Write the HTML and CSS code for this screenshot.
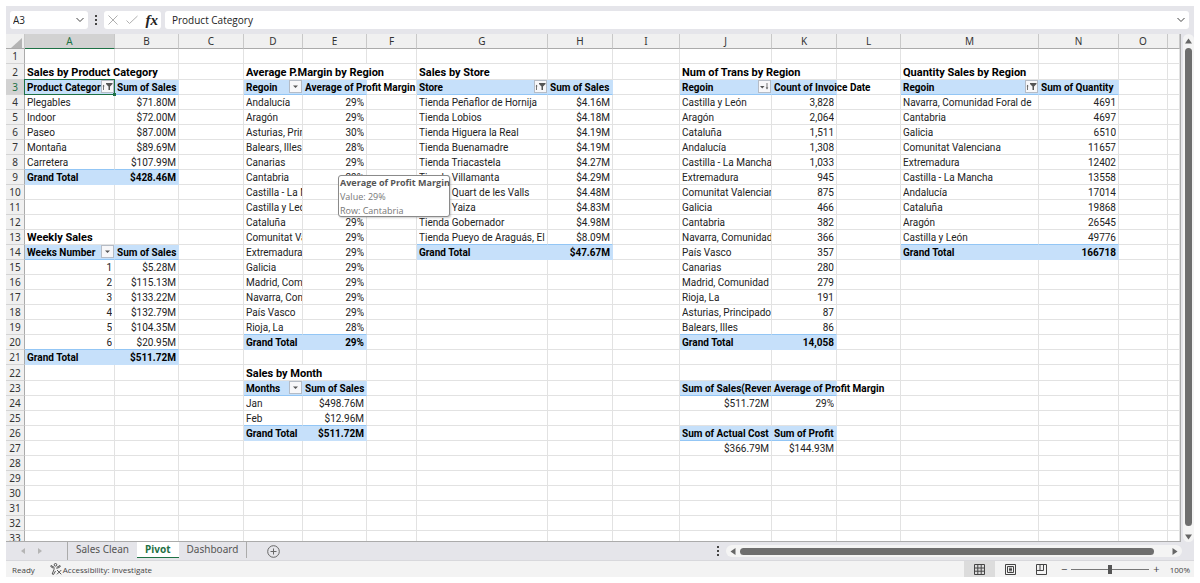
FILE: index.html
```
<!DOCTYPE html>
<html lang="en">
<head>
    <meta charset="UTF-8">
    <meta name="viewport" content="width=device-width, initial-scale=1.0">
    <title>Pivot</title>
    <link rel="stylesheet" href="styles.css">
</head>
<body>
    <div class="app">
        <header class="formula-bar">
            <div class="name-box">
                <input type="text" value="A3" aria-label="Name box">
                <button type="button" aria-label="Named ranges">
                    <svg width="10" height="6" viewBox="0 0 10 6"><path d="M1.5 1L5 4.5L8.5 1"/></svg>
                </button>
            </div>
            <span class="dots"></span>
            <div class="entry">
                <button type="button" aria-label="Cancel"><svg width="12" height="12" viewBox="0 0 12 12"><path class="off" d="M1.5 1.5L10.5 10.5M10.5 1.5L1.5 10.5"/></svg></button>
                <button type="button" aria-label="Enter"><svg width="14" height="12" viewBox="0 0 14 12"><path class="off" d="M1.5 6.5L4.5 9.5L12.5 2"/></svg></button>
                <button type="button" class="fx" aria-label="Insert function">fx</button>
            </div>
            <div class="formula">
                <input type="text" value="Product Category" aria-label="Formula">
                <button type="button" aria-label="Expand formula bar">
                    <svg width="10" height="6" viewBox="0 0 10 6"><path d="M1.5 1L5 4.5L8.5 1"/></svg>
                </button>
            </div>
        </header>

        <main class="workspace">
            <div class="sheet">
                <table id="grid" class="grid"></table>
            </div>
            <div class="vscroll">
                <svg width="7" height="6" viewBox="0 0 7 6"><path d="M3.5 0.5L7 5.5H0Z"/></svg>
                <span class="thumb"></span>
                <svg width="7" height="6" viewBox="0 0 7 6"><path d="M3.5 5.5L7 0.5H0Z"/></svg>
            </div>
        </main>

        <nav class="tabs">
            <div class="tab-arrows">
                <svg width="4" height="6" viewBox="0 0 4 6"><path d="M4 0V6L0 3Z"/></svg>
                <svg width="4" height="6" viewBox="0 0 4 6"><path d="M0 0V6L4 3Z"/></svg>
            </div>
            <a class="tab" href="#clean">Sales Clean</a>
            <a class="tab active" href="#pivot">Pivot</a>
            <a class="tab" href="#dashboard">Dashboard</a>
            <button type="button" class="add" aria-label="New sheet">
                <svg width="13" height="13" viewBox="0 0 13 13"><circle cx="6.5" cy="6.5" r="5.8"/><path d="M6.5 3.5V9.5M3.5 6.5H9.5"/></svg>
            </button>
            <div class="hscroll-wrap">
                <span class="dots"></span>
                <div class="hscroll">
                    <svg width="6" height="7" viewBox="0 0 6 7"><path d="M5.5 0V7L0.5 3.5Z"/></svg>
                    <span class="thumb"></span>
                    <svg width="6" height="7" viewBox="0 0 6 7"><path d="M0.5 0V7L5.5 3.5Z"/></svg>
                </div>
            </div>
        </nav>

        <footer class="status">
            <span class="ready">Ready</span>
            <svg class="access" width="12" height="12" viewBox="0 0 12 12"><circle cx="5.5" cy="1.8" r="1.3"/><path d="M1 2.5L4 4.2V6.5L2.2 11L3.6 11.4L5.5 8M10 2.5L7 4.2V6M1 2.5L0.8 3.6L3 5M10 2.5L10.3 3.6L8 5M7 7L11.3 11.3M11.3 7L7 11.3"/></svg>
            <a href="#accessibility">Accessibility: Investigate</a>
            <div class="views">
                <button type="button" class="on" aria-label="Normal view"><svg width="11" height="11" viewBox="0 0 11 11"><path d="M0.5 0.5H10.5V10.5H0.5ZM0.5 4H10.5M0.5 7.2H10.5M3.8 0.5V10.5M7.2 0.5V10.5"/></svg></button>
                <button type="button" aria-label="Page layout"><svg width="11" height="11" viewBox="0 0 11 11"><path d="M0.5 0.5H10.5V10.5H0.5ZM2.5 2.5H8.5V8.5H2.5ZM4 4.2H7M4 5.5H7M4 6.8H7"/></svg></button>
                <button type="button" aria-label="Page break preview"><svg width="11" height="11" viewBox="0 0 11 11"><path d="M0.5 0.5H10.5V10.5H0.5ZM0.5 6.5H7.5V0.5M4 0.5V6.5"/></svg></button>
            </div>
            <button type="button" class="zoom-btn" aria-label="Zoom out">−</button>
            <input type="range" min="10" max="190" value="100" aria-label="Zoom">
            <button type="button" class="zoom-btn" aria-label="Zoom in">+</button>
            <span class="percent">100%</span>
        </footer>
    </div>
    <script src="grid.js"></script>
</body>
</html>
```
FILE: styles.css
```
* {
    box-sizing: border-box;
}
body {
    margin: 0;
    padding: 6px;
    background: #fff;
    color: #222;
    font-family: "Noto Sans", sans-serif;
    font-size: 10px;
}
button, input {
    font: inherit;
    color: inherit;
    border: 0;
    padding: 0;
    margin: 0;
    background: none;
}
a {
    color: inherit;
    text-decoration: none;
}
svg {
    display: block;
    flex: none;
}
.app {
    display: flex;
    flex-direction: column;
    height: calc(100vh - 12px);
    background: #e5e5ea;
}

/* formula bar */
.formula-bar {
    display: flex;
    align-items: center;
    flex: none;
    height: 28px;
    padding: 0 5px 0 4px;
    font-family: "Open Sans", sans-serif;
}
.formula-bar svg {
    fill: none;
    stroke: #444;
    stroke-width: 1;
}
.formula-bar svg .off {
    stroke: #b0b0b0;
}
.name-box, .entry, .formula {
    display: flex;
    align-items: center;
    height: 18px;
    padding: 0 3px;
    background: #fff;
    border-radius: 3px;
}
.name-box {
    width: 78px;
}
.name-box input, .formula input {
    flex: 1;
    min-width: 0;
}
.dots {
    flex: none;
    width: 2px;
    height: 10px;
    margin: 0 7px;
    background: repeating-linear-gradient(#444 0 2px, transparent 2px 4px);
}
.entry {
    width: 57px;
    justify-content: space-between;
    margin-right: 4px;
}
.fx {
    font-family: "Liberation Serif", serif;
    font-size: 15px;
    font-style: italic;
    font-weight: bold;
    line-height: 16px;
}
.formula {
    flex: 1;
    padding-left: 7px;
}

/* sheet */
.workspace {
    display: flex;
    flex: 1;
    min-height: 0;
}
.sheet {
    flex: 1;
    min-width: 0;
    overflow: hidden;
    background: #fff;
    border-right: 1px solid #ababab;
    border-bottom: 1px solid #ababab;
}
.grid {
    width: 100%;
    table-layout: fixed;
    border-collapse: separate;
    border-spacing: 0;
    font-family: Roboto, sans-serif;
    line-height: 16px;
}
.grid tr {
    height: 15px;
}
.grid tr.tall {
    height: 16px;
}
.grid th {
    padding: 1px 0 0;
    background: #f0f0f0;
    border-right: 1px solid #c8c8c8;
    border-bottom: 1px solid #d4d4d4;
    font-family: "Noto Sans", sans-serif;
    font-weight: normal;
    line-height: 13px;
    color: #333;
}
.grid thead th {
    border-bottom-color: #ababab;
}
.grid tbody th {
    border-right-color: #ababab;
}
.grid th.current {
    background: #d2d2d2;
    color: #1e7145;
}
.grid thead th.current {
    border-bottom: 1px solid #1e7145;
}
.corner svg {
    margin: 2px 2px 0 auto;
    fill: #b4b4b4;
}
.grid td {
    position: relative;
    padding: 0 2px;
    border-right: 1px solid #e2e2e2;
    border-bottom: 1px solid #e2e2e2;
    white-space: nowrap;
}
.cell {
    display: flex;
    overflow: hidden;
    height: 14px;
    margin-right: -2px;
}
.cell span {
    flex: 1;
    min-width: 0;
    overflow: hidden;
}
.num .cell {
    margin-right: 0;
    text-align: right;
}
.spill .cell, .spill .cell span {
    overflow: visible;
}
.grid td.spill, .grid td.under {
    border-right-color: transparent;
}
.title {
    font-size: 11px;
    font-weight: bold;
    color: #000;
}
.head, .total {
    font-weight: bold;
    color: #000;
}
.grid td.head, .grid td.total {
    background: #c6e0fa;
    border-color: #c6e0fa;
}
.grid td.head, .grid td.above-total {
    border-bottom-color: #93c6f5;
}
.filter {
    flex: none;
    width: 13px;
    height: 13px;
    background: #f7f7f9;
    border: 1px solid #b5bcc6;
}
.filter svg {
    fill: #555;
}
.selected {
    z-index: 1;
}
.selected::before {
    content: "";
    position: absolute;
    inset: -1px;
    border: 1px solid #1e7145;
    pointer-events: none;
}
.selected::after {
    content: "";
    position: absolute;
    right: -2px;
    bottom: -2px;
    width: 3px;
    height: 3px;
    background: #1e7145;
}
.tooltip {
    position: absolute;
    z-index: 2;
    left: 35px;
    top: 5px;
    width: 112px;
    height: 42px;
    padding: 0 1px;
    border: 1px solid #8a8a8a;
    border-radius: 3px;
    background: #fff;
    box-shadow: 1px 1px 2px rgba(0, 0, 0, .2);
    color: #777;
    font-family: "Open Sans", sans-serif;
    font-size: 9px;
    line-height: 14px;
    text-align: left;
}
.tooltip b {
    display: block;
    color: #555;
}
.tooltip p {
    margin: 0;
}

/* scrollbars */
.vscroll {
    display: flex;
    flex-direction: column;
    align-items: center;
    justify-content: space-between;
    gap: 4px;
    width: 11px;
    margin-left: 2px;
    padding: 4px 0 2px;
    border-radius: 6px;
    background: #f4f4f4;
}
.vscroll svg, .hscroll svg {
    fill: #666;
}
.thumb {
    border-radius: 4px;
    background: #6e6e6e;
}
.vscroll .thumb {
    width: 7px;
    flex: 1;
    margin-bottom: 4px;
}

/* sheet tabs */
.tabs {
    display: flex;
    flex: none;
    height: 18px;
    padding-right: 12px;
    color: #555;
}
.tab-arrows {
    display: flex;
    align-items: center;
    gap: 13px;
    width: 62px;
    padding-left: 15px;
    border-right: 1px solid #ababab;
}
.tab-arrows svg {
    fill: #b5b5b5;
}
.tab {
    height: 16px;
    padding: 0 8px;
    line-height: 15px;
}
.tab:last-of-type {
    border-right: 1px solid #ababab;
}
.tab.active {
    background: #fff;
    border-bottom: 1px solid #1e7145;
    color: #1e7145;
    font-weight: bold;
}
.add {
    margin-left: 20px;
}
.add svg {
    fill: none;
    stroke: #666;
}
.hscroll-wrap {
    display: flex;
    align-items: center;
    flex: 0 1 472px;
    margin-left: auto;
}
.hscroll {
    display: flex;
    align-items: center;
    gap: 4px;
    flex: 1;
    height: 12px;
    padding: 0 4px;
    border-radius: 6px;
    background: #f4f4f4;
}
.hscroll .thumb {
    flex: 1;
    height: 7px;
    margin-right: 14px;
}

/* status bar */
.status {
    display: flex;
    align-items: center;
    flex: none;
    height: 17px;
    padding: 0 4px 0 6px;
    background: #f3f3f3;
    border-top: 1px solid #d8d8dc;
    font-family: "Open Sans", sans-serif;
    font-size: 8px;
    color: #444;
}
.access {
    margin: 0 1px 0 15px;
    fill: none;
    stroke: #444;
    stroke-width: .9;
}
.views {
    display: flex;
    align-self: stretch;
    margin: 0 4px 0 auto;
}
.views button {
    display: grid;
    place-items: center;
    width: 31px;
}
.views .on {
    background: #dcdcdc;
}
.views svg {
    fill: none;
    stroke: #444;
}
.zoom-btn {
    font-size: 11px;
    line-height: 14px;
}
.status input {
    appearance: none;
    width: 78px;
    height: 9px;
    margin: 0 4px;
    background: linear-gradient(#777, #777) center / 100% 1px no-repeat;
}
.status input::-webkit-slider-thumb {
    appearance: none;
    width: 4px;
    height: 9px;
    background: #555;
}
.percent {
    margin-left: 10px;
}
```
FILE: grid.js
```
const columns = {
    A: 90, B: 64, C: 65, D: 59, E: 64, F: 50, G: 131, H: 65, I: 67,
    J: 92, K: 65, L: 64, M: 138, N: 80, O: 49
}
const letters = Object.keys(columns)
const rowCount = 33
const tallRows = [2, 22]
const cells = {}

const icons = {
    down: '<svg width="11" height="11" viewBox="0 0 11 11"><path d="M3 4.5H8L5.5 7Z"/></svg>',
    filter: '<svg width="11" height="11" viewBox="0 0 11 11"><path d="M4 2H10.5V3L8 5.5V9H6.5V5.5L4 3ZM1.2 5H2V9H1.2ZM0.6 5.2L1.6 3.8L2.6 5.2Z"/></svg>',
    sort: '<svg width="11" height="11" viewBox="0 0 11 11"><path d="M1 5H5.5L3.3 7.5ZM7.6 2H8.4V7H7.6ZM6.7 6.5H9.3L8 8.5Z"/></svg>'
}

function put(ref, text, kind = '', icon = '') {
    cells[ref] = { text, kind, icon }
}

// one pivot: heading row, body rows, optional grand total
function pivot(left, right, top, { title, heads, icon, rows, total, labelKind = '' }) {
    if (title) put(left + (top - 1), title, 'title')
    put(left + top, heads[0], 'head', icon)
    put(right + top, heads[1], 'head')
    rows.forEach(([label, value], i) => {
        put(left + (top + 1 + i), label, labelKind)
        put(right + (top + 1 + i), value, 'num')
    })
    if (total) {
        const last = top + rows.length
        cells[left + last].kind += ' above-total'
        cells[right + last].kind += ' above-total'
        put(left + (last + 1), 'Grand Total', 'total')
        put(right + (last + 1), total, 'total num')
    }
}

pivot('A', 'B', 3, {
    title: 'Sales by Product Category', heads: ['Product Category', 'Sum of Sales'], icon: 'filter', total: '$428.46M',
    rows: [['Plegables', '$71.80M'], ['Indoor', '$72.00M'], ['Paseo', '$87.00M'], ['Montaña', '$89.69M'], ['Carretera', '$107.99M']]
})
pivot('A', 'B', 14, {
    title: 'Weekly Sales', heads: ['Weeks Number', 'Sum of Sales'], icon: 'down', total: '$511.72M', labelKind: 'num',
    rows: [['1', '$5.28M'], ['2', '$115.13M'], ['3', '$133.22M'], ['4', '$132.79M'], ['5', '$104.35M'], ['6', '$20.95M']]
})
pivot('D', 'E', 3, {
    title: 'Average P.Margin by Region', heads: ['Regoin', 'Average of Profit Margin'], icon: 'down', total: '29%',
    rows: [['Andalucía', '29%'], ['Aragón', '29%'], ['Asturias, Principado de', '30%'], ['Balears, Illes', '28%'],
        ['Canarias', '29%'], ['Cantabria', '29%'], ['Castilla - La Mancha', '29%'], ['Castilla y León', '29%'],
        ['Cataluña', '29%'], ['Comunitat Valenciana', '29%'], ['Extremadura', '29%'], ['Galicia', '29%'],
        ['Madrid, Comunidad de', '29%'], ['Navarra, Comunidad Foral de', '29%'], ['País Vasco', '29%'], ['Rioja, La', '28%']]
})
pivot('D', 'E', 23, {
    title: 'Sales by Month', heads: ['Months', 'Sum of Sales'], icon: 'down', total: '$511.72M',
    rows: [['Jan', '$498.76M'], ['Feb', '$12.96M']]
})
pivot('G', 'H', 3, {
    title: 'Sales by Store', heads: ['Store', 'Sum of Sales'], icon: 'filter', total: '$47.67M',
    rows: [['Tienda Peñaflor de Hornija', '$4.16M'], ['Tienda Lobios', '$4.18M'], ['Tienda Higuera la Real', '$4.19M'],
        ['Tienda Buenamadre', '$4.19M'], ['Tienda Triacastela', '$4.27M'], ['Tienda Villamanta', '$4.29M'],
        ['Tienda Quart de les Valls', '$4.48M'], ['Tienda Yaiza', '$4.83M'], ['Tienda Gobernador', '$4.98M'],
        ['Tienda Pueyo de Araguás, El', '$8.09M']]
})
pivot('J', 'K', 3, {
    title: 'Num of Trans by Region', heads: ['Regoin', 'Count of Invoice Date'], icon: 'sort', total: '14,058',
    rows: [['Castilla y León', '3,828'], ['Aragón', '2,064'], ['Cataluña', '1,511'], ['Andalucía', '1,308'],
        ['Castilla - La Mancha', '1,033'], ['Extremadura', '945'], ['Comunitat Valenciana', '875'], ['Galicia', '466'],
        ['Cantabria', '382'], ['Navarra, Comunidad Foral de', '366'], ['País Vasco', '357'], ['Canarias', '280'],
        ['Madrid, Comunidad de', '279'], ['Rioja, La', '191'], ['Asturias, Principado de', '87'], ['Balears, Illes', '86']]
})
pivot('J', 'K', 23, {
    heads: ['Sum of Sales(Revenue)', 'Average of Profit Margin'], rows: [['$511.72M', '29%']], labelKind: 'num'
})
pivot('J', 'K', 26, {
    heads: ['Sum of Actual Cost', 'Sum of Profit'], rows: [['$366.79M', '$144.93M']], labelKind: 'num'
})
pivot('M', 'N', 3, {
    title: 'Quantity Sales by Region', heads: ['Regoin', 'Sum of Quantity'], icon: 'filter', total: '166718',
    rows: [['Navarra, Comunidad Foral de', '4691'], ['Cantabria', '4697'], ['Galicia', '6510'], ['Comunitat Valenciana', '11657'],
        ['Extremadura', '12402'], ['Castilla - La Mancha', '13558'], ['Andalucía', '17014'], ['Cataluña', '19868'],
        ['Aragón', '26545'], ['Castilla y León', '49776']]
})

// texts that run on into the empty cell beside them
for (const ref of ['A2', 'D2', 'J2', 'D22', 'E3', 'K3', 'K23']) cells[ref].kind += ' spill'
put('E2', '', 'under')
cells.A3.kind += ' selected'

const tooltip = '<div class="tooltip"><b>Average of Profit Margin</b><p>Value: 29%</p><p>Row: Cantabria</p></div>'

function cellHtml(ref) {
    const cell = cells[ref]
    if (!cell) return '<td></td>'
    const button = cell.icon ? `<button type="button" class="filter" aria-label="Filter">${icons[cell.icon]}</button>` : ''
    return `<td class="${cell.kind}"><div class="cell"><span>${cell.text}</span>${button}</div>${ref === 'E9' ? tooltip : ''}</td>`
}

let html = '<colgroup><col style="width:19px">'
html += letters.map(l => `<col style="width:${columns[l]}px">`).join('') + '<col></colgroup>'
html += '<thead><tr><th class="corner"><svg width="11" height="10" viewBox="0 0 11 10"><path d="M11 0V10H0Z"/></svg></th>'
html += letters.map(l => `<th class="${l === 'A' ? 'current' : ''}">${l}</th>`).join('') + '<th></th></tr></thead><tbody>'
for (let r = 1; r <= rowCount; r++) {
    html += `<tr class="${tallRows.includes(r) ? 'tall' : ''}"><th class="${r === 3 ? 'current' : ''}">${r}</th>`
    html += letters.map(l => cellHtml(l + r)).join('') + '<td></td></tr>'
}
document.querySelector('#grid').innerHTML = html + '</tbody>'
```
